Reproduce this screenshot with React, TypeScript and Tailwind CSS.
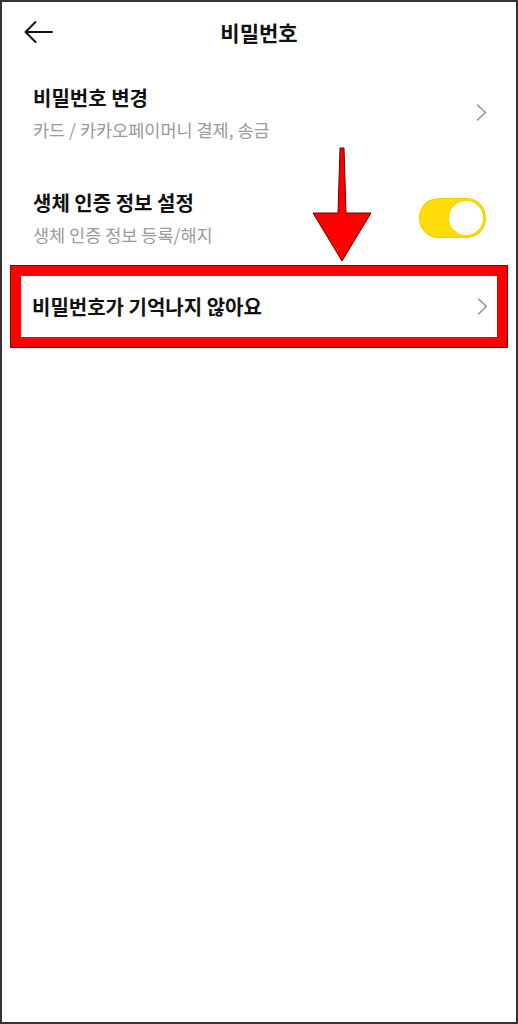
import React from "react";

const FONT = "font-['Noto_Sans_CJK_KR','Noto_Sans',sans-serif]";

function Chevron() {
  return (
    <svg width="11" height="17" viewBox="0 0 11 17" fill="none" className="shrink-0">
      <path d="M1.5 1 L9.5 8.5 L1.5 16" stroke="#8e8e8e" strokeWidth="1.4" strokeLinecap="round" strokeLinejoin="round" />
    </svg>
  );
}

function Toggle() {
  return (
    <div className="w-[67px] h-[40px] rounded-full bg-[#fedd0a] flex items-center justify-end p-[1px] shadow-[inset_0_0_0_1px_#f1cf00]">
      <div className="w-[38px] h-[38px] rounded-full bg-white border-2 border-[#fbd800]" />
    </div>
  );
}

function DownArrow() {
  return (
    <svg
      width="60"
      height="116"
      viewBox="0 0 60 116"
      className="absolute left-[310px] top-[145px]"
    >
      <polygon
        points="28,1 32,1 34,66 59,66 30,114 1,66 26,66"
        fill="#ff0000"
        stroke="#6b0000"
        strokeWidth="1"
        strokeLinejoin="miter"
      />
    </svg>
  );
}

export default function App() {
  return (
    <div className={`relative w-[518px] h-[1024px] border-2 border-[#333] bg-white ${FONT}`}>
      <header className="grid grid-cols-[1fr_auto_1fr] items-center h-[60px] px-[22px]">
        <svg width="29" height="24" viewBox="0 0 29 24" fill="none">
          <path d="M28 12 H2 M11.5 2 L1.5 12 L11.5 22" stroke="#111" strokeWidth="2" strokeLinecap="round" strokeLinejoin="round" />
        </svg>
        <h1 className="text-[21px] leading-[28px] font-bold text-[#111]">비밀번호</h1>
        <div />
      </header>

      <div className="flex items-center justify-between pl-[31px] pr-[29px] pt-[22px]">
        <div className="flex flex-col">
          <span className="text-[20px] leading-[27px] font-bold text-[#111]">비밀번호 변경</span>
          <span className="mt-[7px] text-[17.5px] leading-[23px] text-[#9a9a9a]">카드 / 카카오페이머니 결제, 송금</span>
        </div>
        <Chevron />
      </div>

      <div className="flex items-center justify-between pl-[31px] pr-[30px] mt-[48px]">
        <div className="flex flex-col">
          <span className="text-[20px] leading-[27px] font-bold text-[#111]">생체 인증 정보 설정</span>
          <span className="mt-[7px] text-[17.5px] leading-[23px] text-[#9a9a9a]">생체 인증 정보 등록/해지</span>
        </div>
        <Toggle />
      </div>

      <div className="ml-[9px] mr-[9px] mt-[20px] border-[10px] border-[#ff0000] shadow-[0_0_0_1px_#8a0000] h-[81px] flex items-center justify-between pl-[11px] pr-[9px]">
        <span className="text-[20px] leading-[27px] font-bold text-[#111]">비밀번호가 기억나지 않아요</span>
        <Chevron />
      </div>

      <DownArrow />
    </div>
  );
}
